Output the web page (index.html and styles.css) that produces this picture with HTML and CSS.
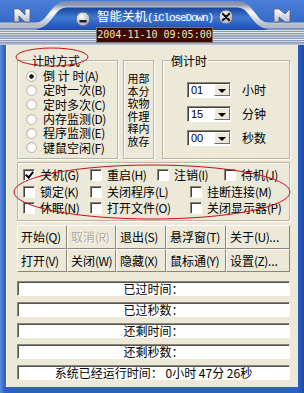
FILE: index.html
```html
<!DOCTYPE html>
<html>
<head>
  <meta charset="UTF-8">
  <title>智能关机(iCloseDown)</title>
  <link rel="stylesheet" href="styles.css">
</head>
<body>
  <div class="window">
    <!-- skinned frame behind the caption -->
    <svg class="chrome" width="304" height="45" viewBox="0 0 304 45">
      <defs>
        <linearGradient id="corner" x1="0" y1="0" x2="0" y2="1">
          <stop offset="0" stop-color="#4a7fd8"/>
          <stop offset="1" stop-color="#2556b6"/>
        </linearGradient>
        <linearGradient id="sky" x1="0" y1="0" x2="0" y2="1">
          <stop offset="0" stop-color="#16409a"/>
          <stop offset="0.45" stop-color="#3f7ad2"/>
          <stop offset="0.7" stop-color="#2f66c4"/>
          <stop offset="1" stop-color="#1e4da8"/>
        </linearGradient>
        <linearGradient id="band" x1="0" y1="0" x2="0" y2="1">
          <stop offset="0" stop-color="#8e96ae"/>
          <stop offset="0.35" stop-color="#ffffff"/>
          <stop offset="1" stop-color="#b4bacb"/>
        </linearGradient>
        <pattern id="lines" width="4" height="2.3" patternUnits="userSpaceOnUse">
          <rect width="4" height="1.1" fill="#f6f6f6"/>
          <rect y="1.1" width="4" height="1.2" fill="#8d97b2"/>
        </pattern>
        <linearGradient id="logo" x1="0" y1="0" x2="0" y2="1">
          <stop offset="0" stop-color="#ffffff"/>
          <stop offset="1" stop-color="#b9bfd0"/>
        </linearGradient>
      </defs>
      <rect width="304" height="45" fill="url(#corner)"/>
      <rect y="29" width="304" height="16" fill="url(#lines)"/>
      <path d="M34 30 C50 30 52 7 68 7 H236 C252 7 254 30 270 30 Z" fill="url(#sky)"/>
      <path d="M0 25.5 H36 C50 25.5 52 4.5 66 4.5 H238 C252 4.5 254 25.5 268 25.5 H304" fill="none" stroke="url(#band)" stroke-width="6"/>
      <path d="M14 9 H19 L25 15 V9 H30 V22 H25 L19 16 V22 H14 Z" fill="url(#logo)" stroke="#55607a" stroke-width="0.8"/>
      <path d="M274 9 H279 L285 14 L290 9 V22 H285 L279 17 V22 H274 Z" fill="url(#logo)" stroke="#55607a" stroke-width="0.8"/>
    </svg>

    <div class="titlebar">
      <div class="caption">
        <svg class="knob" width="16" height="16" viewBox="0 0 16 16">
          <defs>
            <radialGradient id="pearl" cx="0.4" cy="0.35" r="0.7">
              <stop offset="0" stop-color="#ffffff"/>
              <stop offset="1" stop-color="#9aa2b8"/>
            </radialGradient>
          </defs>
          <circle cx="8" cy="8" r="7" fill="url(#pearl)" stroke="#5a6378"/>
          <rect x="4.5" y="9" width="7" height="2.5" fill="#1c1c1c"/>
        </svg>
        <span class="title">智能关机<span class="latin">(iCloseDown)</span></span>
        <svg class="knob close" width="16" height="16" viewBox="0 0 16 16">
          <circle cx="8" cy="8" r="7" fill="url(#pearl)" stroke="#5a6378"/>
          <path d="M5 5 L11 11 M11 5 L5 11" stroke="#111" stroke-width="2.2" stroke-linecap="round"/>
        </svg>
      </div>
      <div class="clock">2004-11-10 09:05:00</div>
    </div>

    <div class="client">
      <div class="top">
        <div class="group mode">
          <div class="legend">计时方式</div>
          <div class="radio on"><i></i>倒 计 时<u>(A)</u></div>
          <div class="radio"><i></i>定时一次<u>(B)</u></div>
          <div class="radio"><i></i>定时多次<u>(C)</u></div>
          <div class="radio"><i></i>内存监测<u>(D)</u></div>
          <div class="radio"><i></i>程序监测<u>(E)</u></div>
          <div class="radio"><i></i>键鼠空闲<u>(F)</u></div>
        </div>
        <div class="note">用部<br>本分<br>软物<br>件理<br>释内<br>放存</div>
        <div class="group count">
          <div class="legend">倒计时</div>
          <div class="spin"><span class="combo"><span class="val">01</span><b></b></span><span>小时</span></div>
          <div class="spin"><span class="combo"><span class="val">15</span><b></b></span><span>分钟</span></div>
          <div class="spin"><span class="combo"><span class="val">00</span><b></b></span><span>秒数</span></div>
        </div>
      </div>

      <div class="group actions">
        <div class="row">
          <div class="check on w1"><i></i>关机<u>(G)</u></div>
          <div class="check w1"><i></i>重启<u>(H)</u></div>
          <div class="check w1"><i></i>注销<u>(I)</u></div>
          <div class="check"><i></i>待机<u>(J)</u></div>
        </div>
        <div class="row">
          <div class="check w1"><i></i>锁定<u>(K)</u></div>
          <div class="check w2"><i></i>关闭程序<u>(L)</u></div>
          <div class="check"><i></i>挂断连接<u>(M)</u></div>
        </div>
        <div class="row">
          <div class="check w1"><i></i>休眠<u>(N)</u></div>
          <div class="check w2"><i></i>打开文件<u>(O)</u></div>
          <div class="check"><i></i>关闭显示器<u>(P)</u></div>
        </div>
      </div>

      <div class="buttons">
        <div class="btn c1">开始<u>(Q)</u></div>
        <div class="btn c2 off">取消<u>(R)</u></div>
        <div class="btn c3">退出<u>(S)</u></div>
        <div class="btn c4">悬浮窗<u>(T)</u></div>
        <div class="btn c5">关于<u>(U)</u>...</div>
        <div class="btn c1">打开<u>(V)</u></div>
        <div class="btn c2">关闭<u>(W)</u></div>
        <div class="btn c3">隐藏<u>(X)</u></div>
        <div class="btn c4">鼠标通<u>(Y)</u></div>
        <div class="btn c5">设置<u>(Z)</u>...</div>
      </div>

      <div class="fields">
        <div class="field">已过时间：</div>
        <div class="field">已过秒数：</div>
        <div class="field">还剩时间：</div>
        <div class="field">还剩秒数：</div>
        <div class="field">系统已经运行时间： 0小时 47分 26秒</div>
      </div>
    </div>

    <!-- red annotation rings drawn over the window -->
    <svg class="marks" width="304" height="393" viewBox="0 0 304 393">
      <ellipse cx="52" cy="57" rx="36" ry="9" fill="none" stroke="#c8101c" stroke-width="1"/>
      <ellipse cx="152" cy="192" rx="138" ry="27" fill="none" stroke="#c8101c" stroke-width="1"/>
    </svg>
  </div>
</body>
</html>
```

FILE: styles.css
```css
body {
  margin: 0;
  background: #fff;
  font-family: "Noto Sans CJK SC", "Liberation Sans", sans-serif;
  font-size: 12px;
  color: #000;
}
.window {
  position: relative;
  width: 304px;
  height: 393px;
  background: linear-gradient(90deg, #5b8ee0 0, #2c5fc2 5px, #2c5fc2 298px, #1d4aa8 304px);
  overflow: hidden;
}
.chrome {
  position: absolute;
  left: 0;
  top: 0;
}
.titlebar {
  position: relative;
  height: 45px;
}
.caption {
  display: flex;
  align-items: center;
  height: 16px;
  padding: 9px 0 0 75px;
}
.knob {
  margin-top: 4px;
}
.knob.close {
  margin: -1px 0 0 5px;
}
.title {
  margin-left: 6px;
  color: #fff;
  font-size: 12.5px;
  line-height: 16px;
  white-space: nowrap;
}
.latin {
  font-family: "Liberation Mono", monospace;
  font-size: 11px;
  letter-spacing: -1.1px;
}
.clock {
  width: 115px;
  height: 14px;
  margin: 2px 0 0 96px;
  border: 1px solid #7a7468;
  background: #3d0a06;
  color: #f6e7b4;
  font-family: "DejaVu Sans Mono", monospace;
  font-size: 10px;
  line-height: 14px;
  text-align: center;
}
.client {
  width: 281px;
  height: 327px;
  margin-left: 6px;
  padding: 15px 0 0 11px;
  background: #ece9d8;
  box-shadow: inset 1px 0 0 #fff;
}

/* group boxes */
.group {
  border: 1px solid #b8b4a2;
  box-shadow: inset 1px 1px 0 #fff, 1px 1px 0 #fff;
  box-sizing: border-box;
}
.legend {
  width: max-content;
  margin: -7px 0 0 6px;
  padding: 0 1px;
  background: #ece9d8;
  line-height: 13px;
}
.top {
  display: flex;
  height: 99px;
}
.mode {
  width: 101px;
  padding-left: 8px;
}
.mode .legend {
  margin-left: 5px;
}
.radio {
  display: flex;
  align-items: center;
  height: 14.3px;
  line-height: 14px;
  white-space: pre;
}
.mode .legend + .radio {
  margin-top: 2px;
}
.radio i {
  width: 11px;
  height: 11px;
  margin-right: 6px;
  border-radius: 50%;
  box-sizing: border-box;
  border: 1px solid #b8b6ac;
  background: radial-gradient(circle at 60% 60%, #fff 40%, #dcd9cc 100%);
}
.radio.on i {
  background: radial-gradient(circle, #1e1e1e 0 2px, #fff 2.5px, #fff 55%, #dcd9cc 100%);
}
u {
  text-decoration: none;
  letter-spacing: -0.5px;
}
.note {
  width: 31px;
  margin-left: 5px;
  padding-top: 11px;
  box-sizing: border-box;
  border: 1px solid #b8b4a2;
  box-shadow: inset 1px 1px 0 #fff, 1px 1px 0 #fff;
  font-size: 11px;
  line-height: 12.5px;
  text-align: center;
}
.count {
  width: 128px;
  margin-left: 8px;
  padding-left: 24px;
}
.count .legend {
  margin-left: -17px;
}
.spin {
  display: flex;
  align-items: center;
  gap: 11px;
  margin-top: 7px;
}
.count .legend + .spin {
  margin-top: 14px;
}
.combo {
  display: flex;
  width: 44px;
  height: 16px;
  box-sizing: border-box;
  border: 1px solid;
  border-color: #8a8778 #fff #fff #8a8778;
  box-shadow: inset 1px 1px 0 #404040;
  background: #fff;
}
.val {
  flex: 1;
  padding: 1px 0 0 3px;
  font-family: "Liberation Sans", sans-serif;
  font-size: 11px;
  line-height: 13px;
}
.combo b {
  position: relative;
  width: 16px;
  margin: 1px 0 1px 0;
  box-sizing: border-box;
  border: 1px solid;
  border-color: #fff #716f64 #716f64 #fff;
  background: #ece9d8;
}
.combo b::after {
  content: "";
  position: absolute;
  left: 3px;
  top: 4px;
  border: 4px solid transparent;
  border-top: 4px solid #000;
  border-bottom: 0;
}

/* action check boxes */
.actions {
  width: 273px;
  height: 59px;
  margin-top: 3px;
  padding: 4px 0 0 5px;
}
.row {
  display: flex;
  height: 16.5px;
}
.check {
  display: flex;
  align-items: center;
  white-space: nowrap;
  line-height: 14px;
}
.check.w1 {
  width: 67px;
}
.check.w2 {
  width: 100px;
}
.check i {
  position: relative;
  width: 12px;
  height: 12px;
  margin-right: 5px;
  box-sizing: border-box;
  border: 1px solid;
  border-color: #8a8778 #fff #fff #8a8778;
  box-shadow: inset 1px 1px 0 #404040;
  background: #fff;
}
.check.on i::after {
  content: "";
  position: absolute;
  left: 3px;
  top: 0;
  width: 3px;
  height: 6px;
  border: solid #000;
  border-width: 0 2px 2px 0;
  transform: rotate(40deg);
}

/* command buttons */
.buttons {
  display: grid;
  grid-template-columns: 50px 49px 50px 60px 64px;
  grid-auto-rows: 23.5px;
  width: 273px;
  margin-top: 4px;
}
.btn {
  padding-left: 3px;
  border: 1px solid;
  border-color: #fff #8a8778 #8a8778 #fff;
  line-height: 21px;
  white-space: nowrap;
  overflow: hidden;
}
.btn.off {
  color: #aca899;
  text-shadow: 1px 1px 0 #fff;
}

/* status lines */
.fields {
  display: flex;
  flex-direction: column;
  gap: 6px;
  width: 273px;
  margin-top: 9px;
}
.field {
  height: 15px;
  box-sizing: border-box;
  border: 1px solid;
  border-color: #8a8778 #fff #fff #8a8778;
  box-shadow: inset 1px 1px 0 #555;
  background: #fff;
  line-height: 14px;
  text-align: center;
  white-space: pre;
}
.marks {
  position: absolute;
  left: 0;
  top: 0;
  pointer-events: none;
}
```
